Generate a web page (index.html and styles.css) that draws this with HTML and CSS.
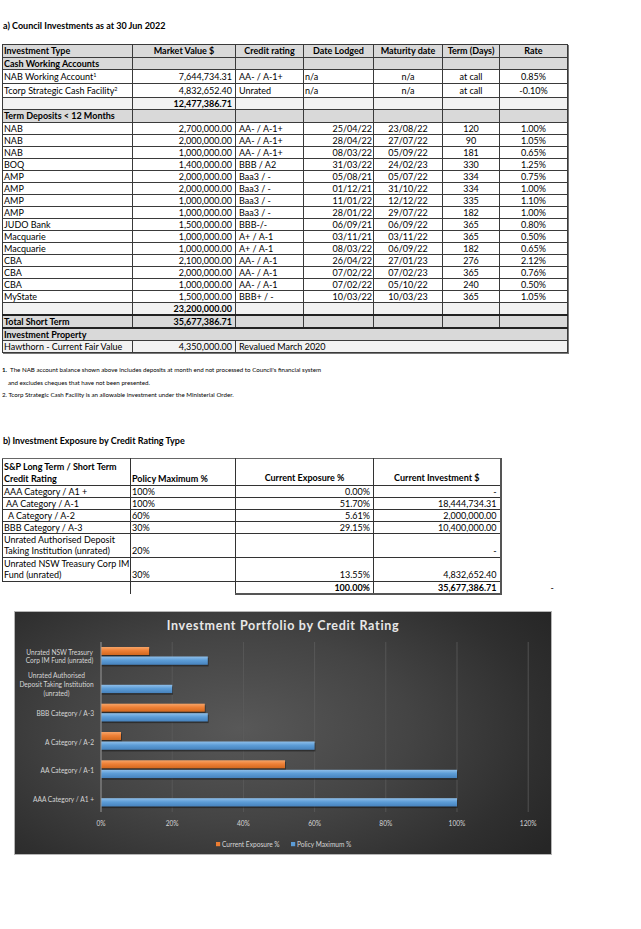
FILE: index.html
```html
<!DOCTYPE html>
<html lang="en">
<head>
<meta charset="utf-8">
<title>Council Investments</title>
<link rel="stylesheet" href="styles.css">
</head>
<body>
<div class="page">
  <h2 class="sec-title title-a">a) Council Investments as at 30 Jun 2022</h2>

  <table class="inv">
    <colgroup>
      <col class="w1"><col class="w2"><col class="w3"><col class="w4"><col class="w5"><col class="w6"><col class="w7">
    </colgroup>
    <tr class="hdr h13">
      <th class="l">Investment Type</th><th>Market Value $</th><th>Credit rating</th><th>Date Lodged</th><th>Maturity date</th><th>Term (Days)</th><th>Rate</th>
    </tr>
    <tr class="grey h12">
      <td class="b">Cash Working Accounts</td><td></td><td></td><td></td><td></td><td></td><td></td>
    </tr>
    <tr class="h14">
      <td>NAB Working Account<sup class="fn">1</sup></td><td class="num">7,644,734.31</td><td class="cr">AA- / A-1+</td><td class="dl">n/a</td><td class="c">n/a</td><td class="c">at call</td><td class="c">0.85%</td>
    </tr>
    <tr class="h14">
      <td>Tcorp Strategic Cash Facility<sup class="fn">2</sup></td><td class="num">4,832,652.40</td><td class="cr">Unrated</td><td class="dl">n/a</td><td class="c">n/a</td><td class="c">at call</td><td class="c">-0.10%</td>
    </tr>
    <tr class="light h12">
      <td></td><td class="num b">12,477,386.71</td><td></td><td></td><td></td><td></td><td></td>
    </tr>
    <tr class="grey h13">
      <td class="b">Term Deposits &lt; 12 Months</td><td></td><td></td><td></td><td></td><td></td><td></td>
    </tr>
    <tr class="h12"><td>NAB</td><td class="num">2,700,000.00</td><td class="cr">AA- / A-1+</td><td class="dr">25/04/22</td><td class="c">23/08/22</td><td class="c">120</td><td class="c">1.00%</td></tr>
    <tr class="h12"><td>NAB</td><td class="num">2,000,000.00</td><td class="cr">AA- / A-1+</td><td class="dr">28/04/22</td><td class="c">27/07/22</td><td class="c">90</td><td class="c">1.05%</td></tr>
    <tr class="h12"><td>NAB</td><td class="num">1,000,000.00</td><td class="cr">AA- / A-1+</td><td class="dr">08/03/22</td><td class="c">05/09/22</td><td class="c">181</td><td class="c">0.65%</td></tr>
    <tr class="h12"><td>BOQ</td><td class="num">1,400,000.00</td><td class="cr">BBB / A2</td><td class="dr">31/03/22</td><td class="c">24/02/23</td><td class="c">330</td><td class="c">1.25%</td></tr>
    <tr class="h12"><td>AMP</td><td class="num">2,000,000.00</td><td class="cr">Baa3 / -</td><td class="dr">05/08/21</td><td class="c">05/07/22</td><td class="c">334</td><td class="c">0.75%</td></tr>
    <tr class="h12"><td>AMP</td><td class="num">2,000,000.00</td><td class="cr">Baa3 / -</td><td class="dr">01/12/21</td><td class="c">31/10/22</td><td class="c">334</td><td class="c">1.00%</td></tr>
    <tr class="h12"><td>AMP</td><td class="num">1,000,000.00</td><td class="cr">Baa3 / -</td><td class="dr">11/01/22</td><td class="c">12/12/22</td><td class="c">335</td><td class="c">1.10%</td></tr>
    <tr class="h12"><td>AMP</td><td class="num">1,000,000.00</td><td class="cr">Baa3 / -</td><td class="dr">28/01/22</td><td class="c">29/07/22</td><td class="c">182</td><td class="c">1.00%</td></tr>
    <tr class="h12"><td>JUDO Bank</td><td class="num">1,500,000.00</td><td class="cr">BBB-/-</td><td class="dr">06/09/21</td><td class="c">06/09/22</td><td class="c">365</td><td class="c">0.80%</td></tr>
    <tr class="h12"><td>Macquarie</td><td class="num">1,000,000.00</td><td class="cr">A+ / A-1</td><td class="dr">03/11/21</td><td class="c">03/11/22</td><td class="c">365</td><td class="c">0.50%</td></tr>
    <tr class="h12"><td>Macquarie</td><td class="num">1,000,000.00</td><td class="cr">A+ / A-1</td><td class="dr">08/03/22</td><td class="c">06/09/22</td><td class="c">182</td><td class="c">0.65%</td></tr>
    <tr class="h12"><td>CBA</td><td class="num">2,100,000.00</td><td class="cr">AA- / A-1</td><td class="dr">26/04/22</td><td class="c">27/01/23</td><td class="c">276</td><td class="c">2.12%</td></tr>
    <tr class="h12"><td>CBA</td><td class="num">2,000,000.00</td><td class="cr">AA- / A-1</td><td class="dr">07/02/22</td><td class="c">07/02/23</td><td class="c">365</td><td class="c">0.76%</td></tr>
    <tr class="h12"><td>CBA</td><td class="num">1,000,000.00</td><td class="cr">AA- / A-1</td><td class="dr">07/02/22</td><td class="c">05/10/22</td><td class="c">240</td><td class="c">0.50%</td></tr>
    <tr class="h12"><td>MyState</td><td class="num">1,500,000.00</td><td class="cr">BBB+ / -</td><td class="dr">10/03/22</td><td class="c">10/03/23</td><td class="c">365</td><td class="c">1.05%</td></tr>
    <tr class="light h12">
      <td></td><td class="num b">23,200,000.00</td><td></td><td></td><td></td><td></td><td></td>
    </tr>
    <tr class="grey total h12">
      <td class="b">Total Short Term</td><td class="num b">35,677,386.71</td><td></td><td></td><td></td><td></td><td></td>
    </tr>
    <tr class="grey h12">
      <td class="b" colspan="7">Investment Property</td>
    </tr>
    <tr class="light h12">
      <td>Hawthorn - Current Fair Value</td><td class="num">4,350,000.00</td><td class="cr" colspan="5">Revalued March 2020</td>
    </tr>
  </table>

  <div class="notes">
    <p class="note"><b>1.</b>&nbsp; The NAB account balance shown above includes deposits at month end not processed to Council's financial system</p>
    <p class="note indent">and excludes cheques that have not been presented.</p>
    <p class="note">2. Tcorp Strategic Cash Facility is an allowable investment under the Ministerial Order.</p>
  </div>

  <h2 class="sec-title title-b">b) Investment Exposure by Credit Rating Type</h2>

  <div class="exp-row">
    <table class="exp">
      <colgroup><col class="e1"><col class="e2"><col class="e3"><col class="e4"></colgroup>
      <tr class="eh">
        <th>S&amp;P Long Term / Short Term<br>Credit Rating</th>
        <th>Policy Maximum %</th>
        <th class="mid">Current Exposure %</th>
        <th class="mid">Current Investment $</th>
      </tr>
      <tr class="r12"><td>AAA Category / A1 +</td><td>100%</td><td class="num">0.00%</td><td class="num">-</td></tr>
      <tr class="r12"><td class="in1">AA Category / A-1</td><td>100%</td><td class="num">51.70%</td><td class="num">18,444,734.31</td></tr>
      <tr class="r12"><td class="in2">A Category / A-2</td><td>60%</td><td class="num">5.61%</td><td class="num">2,000,000.00</td></tr>
      <tr class="r12"><td>BBB Category / A-3</td><td>30%</td><td class="num">29.15%</td><td class="num">10,400,000.00</td></tr>
      <tr class="r24"><td>Unrated Authorised Deposit<br>Taking Institution (unrated)</td><td>20%</td><td class="num"></td><td class="num">-</td></tr>
      <tr class="r24"><td>Unrated NSW Treasury Corp IM<br>Fund (unrated)</td><td>30%</td><td class="num">13.55%</td><td class="num">4,832,652.40</td></tr>
      <tr class="r12 etotal"><td class="blank"></td><td class="blank"></td><td class="num b">100.00%</td><td class="num b">35,677,386.71</td></tr>
    </table>
    <span class="stray">-</span>
  </div>

  <div class="chart">
    <svg width="538" height="244" viewBox="0 0 538 244" xmlns="http://www.w3.org/2000/svg">
      <defs>
        <linearGradient id="gOr" x1="0" y1="0" x2="0" y2="1">
          <stop offset="0" stop-color="#f6a468"/>
          <stop offset="0.45" stop-color="#ee8036"/>
          <stop offset="1" stop-color="#d2681f"/>
        </linearGradient>
        <linearGradient id="gBl" x1="0" y1="0" x2="0" y2="1">
          <stop offset="0" stop-color="#8fbfea"/>
          <stop offset="0.45" stop-color="#5d9dd7"/>
          <stop offset="1" stop-color="#4682bd"/>
        </linearGradient>
      </defs>

      <text class="ctitle" x="269" y="19" text-anchor="middle">Investment Portfolio by Credit Rating</text>

      <g class="grid">
        <line x1="158.2" y1="31" x2="158.2" y2="201"/>
        <line x1="229.4" y1="31" x2="229.4" y2="201"/>
        <line x1="300.6" y1="31" x2="300.6" y2="201"/>
        <line x1="371.8" y1="31" x2="371.8" y2="201"/>
        <line x1="443" y1="31" x2="443" y2="201"/>
        <line x1="514.2" y1="31" x2="514.2" y2="201"/>
      </g>

      <g class="shadow">
        <rect x="87" y="37" width="48.2" height="8"/>
        <rect x="87" y="46.5" width="106.8" height="8.3"/>
        <rect x="87" y="74.8" width="71.2" height="8.3"/>
        <rect x="87" y="93.7" width="103.8" height="8"/>
        <rect x="87" y="103.2" width="106.8" height="8.3"/>
        <rect x="87" y="122" width="20" height="8"/>
        <rect x="87" y="131.5" width="213.6" height="8.3"/>
        <rect x="87" y="150.3" width="184" height="8"/>
        <rect x="87" y="159.8" width="356" height="8.3"/>
        <rect x="87" y="188.2" width="356" height="8.3"/>
      </g>
      <g>
        <rect fill="url(#gOr)" x="87" y="36" width="48.2" height="8"/>
        <rect fill="url(#gBl)" x="87" y="45.5" width="106.8" height="8.3"/>
        <rect fill="url(#gBl)" x="87" y="73.8" width="71.2" height="8.3"/>
        <rect fill="url(#gOr)" x="87" y="92.7" width="103.8" height="8"/>
        <rect fill="url(#gBl)" x="87" y="102.2" width="106.8" height="8.3"/>
        <rect fill="url(#gOr)" x="87" y="121" width="20" height="8"/>
        <rect fill="url(#gBl)" x="87" y="130.5" width="213.6" height="8.3"/>
        <rect fill="url(#gOr)" x="87" y="149.3" width="184" height="8"/>
        <rect fill="url(#gBl)" x="87" y="158.8" width="356" height="8.3"/>
        <rect fill="url(#gBl)" x="87" y="187.2" width="356" height="8.3"/>
      </g>

      <line class="axis" x1="87" y1="31" x2="87" y2="201"/>

      <g class="clabel">
        <text x="45.5" y="43.5" text-anchor="middle">Unrated NSW Treasury</text>
        <text x="45.5" y="52" text-anchor="middle">Corp IM Fund (unrated)</text>
        <text x="42.5" y="66.5" text-anchor="middle">Unrated Authorised</text>
        <text x="42.5" y="75.5" text-anchor="middle">Deposit Taking Institution</text>
        <text x="42.5" y="85" text-anchor="middle">(unrated)</text>
        <text x="80" y="104.5" text-anchor="end">BBB Category / A-3</text>
        <text x="80" y="133.5" text-anchor="end">A Category / A-2</text>
        <text x="80" y="162" text-anchor="end">AA Category / A-1</text>
        <text x="80" y="190.5" text-anchor="end">AAA Category / A1 +</text>
      </g>

      <g class="clabel" text-anchor="middle">
        <text x="87" y="214.5">0%</text>
        <text x="158.2" y="214.5">20%</text>
        <text x="229.4" y="214.5">40%</text>
        <text x="300.6" y="214.5">60%</text>
        <text x="371.8" y="214.5">80%</text>
        <text x="443" y="214.5">100%</text>
        <text x="514.2" y="214.5">120%</text>
      </g>

      <g class="legend">
        <rect x="202" y="231" width="4.2" height="4.2" fill="#ed7d31"/>
        <text class="clabel" x="208" y="235.5">Current Exposure %</text>
        <rect x="277" y="231" width="4.2" height="4.2" fill="#5b9bd5"/>
        <text class="clabel" x="283" y="235.5">Policy Maximum %</text>
      </g>
    </svg>
  </div>
</div>
</body>
</html>
```

FILE: styles.css
```css
html, body {
  margin: 0;
  padding: 0;
  background: #ffffff;
}

body {
  font-family: Lato, "Liberation Sans", sans-serif;
  color: #000;
}

.page {
  padding-left: 2px;
}

.sec-title {
  margin: 0;
  font-size: 9px;
  line-height: 10px;
  font-weight: 700;
  padding-left: 1px;
}

.title-a {
  padding-top: 21px;
  margin-bottom: 13px;
}

/* ---------- Table 1 ---------- */
.inv {
  border-collapse: collapse;
  table-layout: fixed;
  width: 565px;
  border: 1px solid #111;
  box-shadow: 1px 1px 0 #777;
  font-size: 9px;
  line-height: 10px;
}

.w1 { width: 130px; }
.w2 { width: 103px; }
.w3 { width: 68px; }
.w4 { width: 70px; }
.w5 { width: 69px; }
.w6 { width: 57px; }
.w7 { width: 68px; }

.inv th,
.inv td {
  border: 1px solid #3a3a3a;
  padding: 0 1px;
  white-space: nowrap;
  overflow: hidden;
  vertical-align: middle;
  font-weight: 400;
}

.inv th {
  font-weight: 700;
  text-align: center;
}

.inv th.l { text-align: left; }

.hdr { background: #d9d9d9; }
.grey { background: #d9d9d9; }
.light { background: #f2f2f2; }

.h12 td, .h12 th { height: 11px; }
.h13 td, .h13 th { height: 12px; }
.h14 td, .h14 th { height: 13px; }

.inv .b { font-weight: 700; }
.inv .num { text-align: right; padding-right: 3px; }
.inv .cr { padding-left: 3px; }
.inv .dl { text-align: left; }
.inv .dr { text-align: right; padding-right: 1px; }
.inv .c { text-align: center; }

.total td { border-top: 2px solid #222; border-bottom: 2px solid #222; }

.fn {
  font-size: 5.5px;
  line-height: 0;
  vertical-align: 3px;
}

/* ---------- Notes ---------- */
.notes {
  margin-top: 11px;
  font-size: 6.2px;
  line-height: 12.5px;
}

.note {
  margin: 0;
  white-space: nowrap;
}

.note.indent { padding-left: 6px; }

.title-b {
  margin-top: 34px;
  margin-bottom: 12px;
}

/* ---------- Table 2 ---------- */
.exp-row {
  display: flex;
  align-items: flex-end;
}

.exp {
  border-collapse: collapse;
  table-layout: fixed;
  width: 498px;
  font-size: 9px;
  line-height: 11px;
}

.e1 { width: 128px; }
.e2 { width: 105px; }
.e3 { width: 138px; }
.e4 { width: 127px; }

.exp th,
.exp td {
  border: 1px solid #333;
  padding: 0 1px;
  white-space: nowrap;
  overflow: hidden;
  vertical-align: bottom;
  text-align: left;
}

.exp th {
  font-weight: 700;
  height: 25px;
  line-height: 12px;
}

.exp th.mid { text-align: center; padding-bottom: 1px; }

.exp .r12 td { height: 11px; }
.exp .r24 td { height: 23px; line-height: 11.5px; }

.exp .num { text-align: right; padding-right: 3px; }
.exp .b { font-weight: 700; }
.exp .in1 { padding-left: 3px; }
.exp .in2 { padding-left: 5px; }

.exp tr:first-child th { border-top-color: #666; }
.exp th:last-child,
.exp td:last-child { border-right: 2px solid #555; }

.exp .etotal td { border-bottom: 2px solid #555; }
.exp .etotal td.blank {
  border-left: none;
  border-bottom: none;
}

.stray {
  font-size: 9px;
  line-height: 12px;
  margin-left: 49px;
  margin-bottom: 1px;
}

/* ---------- Chart ---------- */
.chart {
  margin-top: 16px;
  margin-left: 12px;
  width: 538px;
  height: 244px;
  border: 1px solid #b5b5b5;
  box-sizing: border-box;
  background: radial-gradient(ellipse 70% 85% at 42% 48%, #585858 0%, #444 45%, #2f2f2f 80%, #262626 100%);
  overflow: hidden;
}

.chart svg {
  display: block;
  margin: -1px 0 0 -1px;
}

.ctitle {
  font-family: Lato, "Liberation Sans", sans-serif;
  font-size: 12.5px;
  font-weight: 700;
  letter-spacing: 0.7px;
  fill: #e8e8e8;
}

.grid line {
  stroke: #5c5c5c;
  stroke-width: 0.8;
}

.axis {
  stroke: #9a9a9a;
  stroke-width: 1;
}

.shadow rect {
  fill: #151515;
  opacity: 0.55;
  transform: translate(0.8px, 0.6px);
}

.clabel,
.clabel text {
  font-family: Lato, "Liberation Sans", sans-serif;
  font-size: 6.6px;
  fill: #d6d6d6;
}
```
